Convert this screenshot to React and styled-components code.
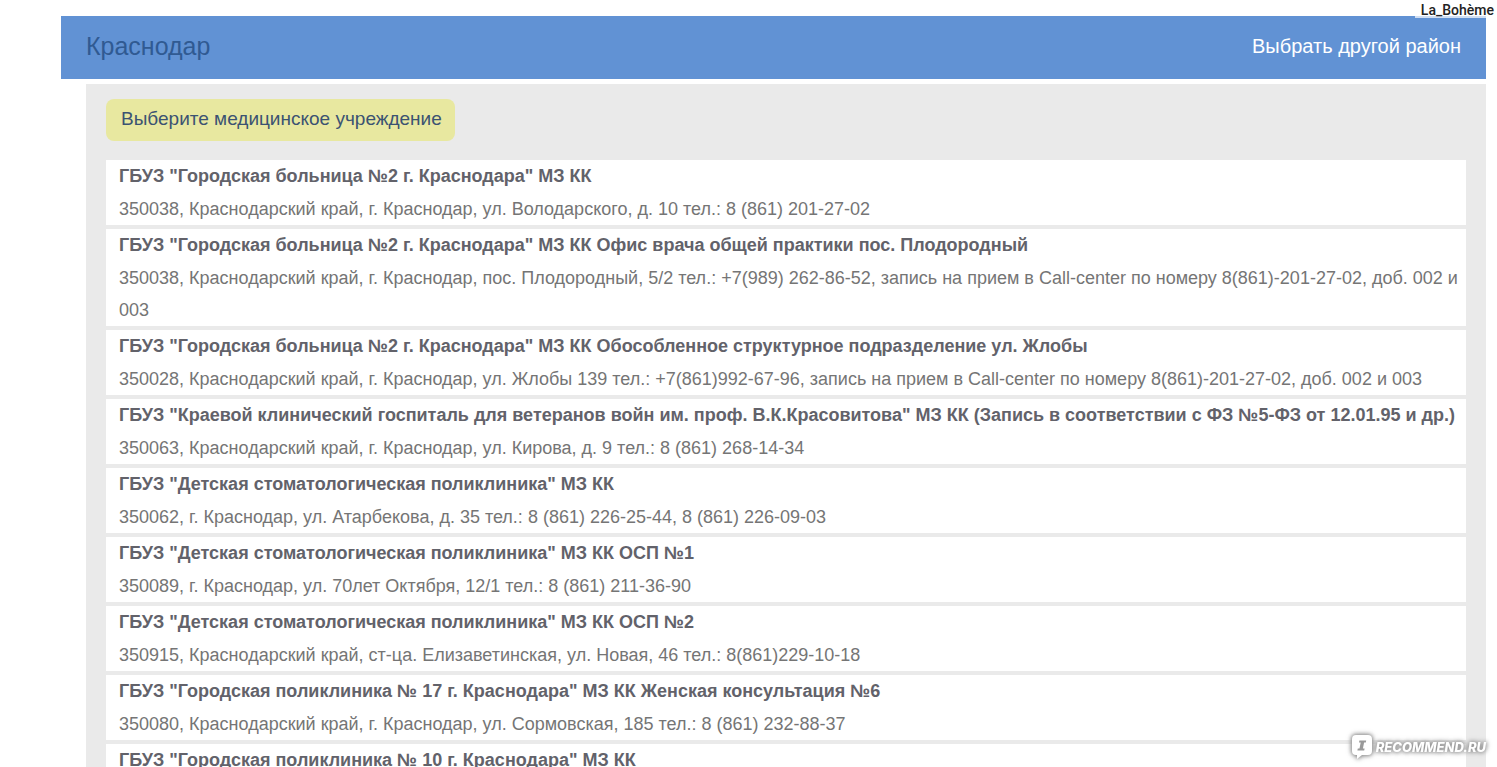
import React from "react";
import styled, { createGlobalStyle } from "styled-components";

const clinics = [
  {
    name: 'ГБУЗ "Городская больница №2 г. Краснодара" МЗ КК',
    address:
      "350038, Краснодарский край, г. Краснодар, ул. Володарского, д. 10 тел.: 8 (861) 201-27-02",
  },
  {
    name: 'ГБУЗ "Городская больница №2 г. Краснодара" МЗ КК Офис врача общей практики пос. Плодородный',
    address:
      "350038, Краснодарский край, г. Краснодар, пос. Плодородный, 5/2 тел.: +7(989) 262-86-52, запись на прием в Call-center по номеру 8(861)-201-27-02, доб. 002 и 003",
  },
  {
    name: 'ГБУЗ "Городская больница №2 г. Краснодара" МЗ КК Обособленное структурное подразделение ул. Жлобы',
    address:
      "350028, Краснодарский край, г. Краснодар, ул. Жлобы 139 тел.: +7(861)992-67-96, запись на прием в Call-center по номеру 8(861)-201-27-02, доб. 002 и 003",
  },
  {
    name: 'ГБУЗ "Краевой клинический госпиталь для ветеранов войн им. проф. В.К.Красовитова" МЗ КК (Запись в соответствии с ФЗ №5-ФЗ от 12.01.95 и др.)',
    address:
      "350063, Краснодарский край, г. Краснодар, ул. Кирова, д. 9 тел.: 8 (861) 268-14-34",
  },
  {
    name: 'ГБУЗ "Детская стоматологическая поликлиника" МЗ КК',
    address:
      "350062, г. Краснодар, ул. Атарбекова, д. 35 тел.: 8 (861) 226-25-44, 8 (861) 226-09-03",
  },
  {
    name: 'ГБУЗ "Детская стоматологическая поликлиника" МЗ КК ОСП №1',
    address:
      "350089, г. Краснодар, ул. 70лет Октября, 12/1 тел.: 8 (861) 211-36-90",
  },
  {
    name: 'ГБУЗ "Детская стоматологическая поликлиника" МЗ КК ОСП №2',
    address:
      "350915, Краснодарский край, ст-ца. Елизаветинская, ул. Новая, 46 тел.: 8(861)229-10-18",
  },
  {
    name: 'ГБУЗ "Городская поликлиника № 17 г. Краснодара" МЗ КК Женская консультация №6',
    address:
      "350080, Краснодарский край, г. Краснодар, ул. Сормовская, 185 тел.: 8 (861) 232-88-37",
  },
  {
    name: 'ГБУЗ "Городская поликлиника № 10 г. Краснодара" МЗ КК',
  },
];

const App = () => {
  return (
    <Page>
      <GlobalStyle />
      <Header>
        <City>Краснодар</City>
        <ChangeLink href="#districts">Выбрать другой район</ChangeLink>
      </Header>
      <Panel>
        <Hint>Выберите медицинское учреждение</Hint>
        <ClinicList>
          {clinics.map((clinic) => (
            <Clinic key={clinic.name}>
              <ClinicLink href="#clinic">{clinic.name}</ClinicLink>
              {clinic.address && <Address>{clinic.address}</Address>}
            </Clinic>
          ))}
        </ClinicList>
      </Panel>
      <UserName>La_Bohème</UserName>
      <Watermark>
        <Bubble viewBox="0 0 22 26" aria-hidden="true">
          <path
            d="M5 1h12q4 0 4 4v12q0 4-4 4h-6l-5 4v-4H5q-4 0-4-4V5q0-4 4-4z"
            fill="#fff"
          />
          <path
            d="M8.4 6.5h6.8l-.4 2h-1.7l-1.2 6h1.7l-.4 2H6.4l.4-2h1.7l1.2-6H8z"
            fill="#999"
          />
        </Bubble>
        <span>RECOMMEND.RU</span>
      </Watermark>
    </Page>
  );
};

export default App;

const GlobalStyle = createGlobalStyle`
  * {
    box-sizing: border-box;
  }

  body {
    margin: 0;
    background-color: white;
    font-family: "Liberation Sans", Arial, sans-serif;
  }
`;

const Page = styled.div`
  position: relative;
  height: 100vh;
  overflow: hidden;
  padding: 16px 11px 0 61px;
`;

const Header = styled.header`
  display: flex;
  justify-content: space-between;
  align-items: center;
  min-height: 63px;
  padding: 0 25px 3px;
  background-color: #6192d4;
`;

const City = styled.h1`
  margin: 0;
  color: #305a92;
  font-size: 25px;
  font-weight: 400;
  line-height: 32px;
`;

const ChangeLink = styled.a`
  color: white;
  font-size: 20px;
  line-height: 32px;
  text-decoration: none;
`;

const Panel = styled.main`
  margin: 5px 0 0 25px;
  padding: 15px 20px;
  background-color: #eaeaea;
`;

const Hint = styled.h2`
  width: fit-content;
  margin: 0;
  padding: 4px 13px 6px 15px;
  border-radius: 8px;
  background-color: #e8e8a0;
  color: #3b5372;
  font-size: 19px;
  font-weight: 400;
  line-height: 32px;
`;

const ClinicList = styled.ul`
  display: flex;
  flex-direction: column;
  gap: 4px;
  margin: 19px 0 0;
  padding: 0;
  list-style: none;
`;

const Clinic = styled.li`
  padding: 0 4px 0 13px;
  background-color: white;
  font-size: 18px;
`;

const ClinicLink = styled.a`
  display: block;
  color: #62626a;
  font-weight: 700;
  line-height: 33px;
  text-decoration: none;
`;

const Address = styled.p`
  margin: 0;
  color: #757575;
  line-height: 32px;
`;

const UserName = styled.div`
  position: absolute;
  top: 0;
  right: 0;
  padding: 2px 3px 0 6px;
  background-color: rgba(255, 255, 255, 0.7);
  color: #222;
  font-family: Roboto, sans-serif;
  font-size: 14px;
  font-weight: 500;
  line-height: 16px;
`;

const Watermark = styled.div`
  position: absolute;
  right: 11px;
  bottom: 6px;
  display: flex;
  align-items: center;
  gap: 3px;
  color: white;
  font-family: Inter, sans-serif;
  font-size: 13px;
  font-style: italic;
  font-weight: 800;
  line-height: 28px;
  filter: drop-shadow(0 0 2px #888) drop-shadow(0 0 2px #aaa);
`;

const Bubble = styled.svg`
  width: 22px;
  height: 26px;
`;
